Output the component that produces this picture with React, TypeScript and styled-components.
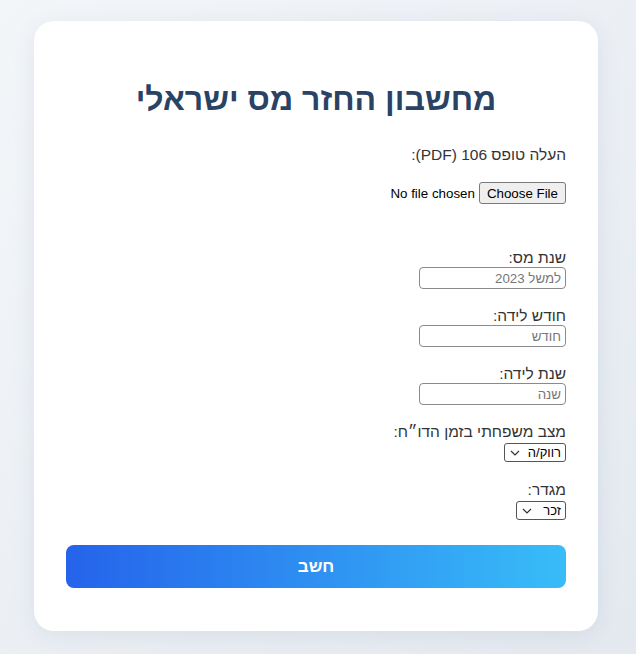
import React from "react";
import styled, { createGlobalStyle } from "styled-components";

const Global = createGlobalStyle`
  html, body { margin: 0; padding: 0; }
  body {
    min-height: 654px;
    background: linear-gradient(135deg, #f3f6f9 0%, #e4e9f0 100%);
    font-family: "Liberation Sans", Arial, sans-serif;
  }
`;

const Page = styled.div`
  display: flex;
  justify-content: flex-start;
  padding: 21px 0 23px 34px;
`;

const Card = styled.form`
  direction: rtl;
  width: 564px;
  height: 610px;
  box-sizing: border-box;
  background: #ffffff;
  border-radius: 20px;
  box-shadow: 0 4px 24px rgba(30, 50, 90, 0.08);
  padding: 58px 32px 0 32px;
  display: flex;
  flex-direction: column;
  align-items: flex-start;
`;

const Title = styled.h1`
  align-self: stretch;
  text-align: center;
  margin: 0 0 27px 0;
  font-size: 32px;
  line-height: 40px;
  font-weight: 700;
  color: #2a4365;
`;

const Field = styled.div<{ $gap?: number }>`
  display: flex;
  flex-direction: column;
  align-items: flex-start;
  margin-bottom: ${(p) => p.$gap ?? 18}px;
`;

const Label = styled.label`
  font-size: 15.5px;
  line-height: 18px;
  color: #333333;
`;

const FileInput = styled.input`
  margin: 18px 0 0 0;
  height: 22px;
  font-family: "Liberation Sans", Arial, sans-serif;
  font-size: 13.33px;
  color: #000;
  &::file-selector-button {
    font-family: "Liberation Sans", Arial, sans-serif;
    font-size: 13.33px;
    height: 22px;
    padding: 0 7px;
    margin: 0 0 0 4px;
    border: 1px solid #7a7a7a;
    border-radius: 3px;
    background: #efefef;
    color: #000;
  }
`;

const TextInput = styled.input`
  width: 147px;
  height: 22px;
  margin: 0;
  box-sizing: border-box;
  font-family: "Liberation Sans", Arial, sans-serif;
  font-size: 13.33px;
  border: 1px solid #8a8a8a;
  border-radius: 4px;
  padding: 1px 4px;
  &::placeholder { color: #777777; }
`;

const chevron =
  "data:image/svg+xml;utf8," +
  encodeURIComponent(
    '<svg xmlns="http://www.w3.org/2000/svg" width="10" height="6" viewBox="0 0 10 6"><path d="M1 1l4 4 4-4" fill="none" stroke="#333" stroke-width="1.2"/></svg>'
  );

const Select = styled.select<{ $w: number }>`
  appearance: none;
  -webkit-appearance: none;
  width: ${(p) => p.$w}px;
  height: 19px;
  margin: 2px 0 0 0;
  box-sizing: border-box;
  padding: 0 4px 0 18px;
  font-family: "Liberation Sans", Arial, sans-serif;
  font-size: 13px;
  font-weight: 400;
  line-height: 17px;
  border: 1px solid #555;
  border-radius: 3px;
  background: #fff url("${chevron}") no-repeat left 5px center;
  color: #000;
`;

const Submit = styled.button`
  align-self: stretch;
  margin-top: 7px;
  height: 43px;
  border: none;
  border-radius: 8px;
  background: linear-gradient(90deg, #2563eb 0%, #38bdf8 100%);
  color: #fff;
  font-family: "Liberation Sans", Arial, sans-serif;
  font-size: 17px;
  font-weight: 700;
  cursor: pointer;
`;

export default function App() {
  return (
    <>
      <Global />
      <Page>
        <Card onSubmit={(e) => e.preventDefault()}>
          <Title>מחשבון החזר מס ישראלי</Title>
          <Field $gap={45}>
            <Label>העלה טופס 106 (PDF):</Label>
            <FileInput type="file" accept="application/pdf" />
          </Field>
          <Field>
            <Label>שנת מס:</Label>
            <TextInput type="text" placeholder="למשל 2023" />
          </Field>
          <Field>
            <Label>חודש לידה:</Label>
            <TextInput type="text" placeholder="חודש" />
          </Field>
          <Field>
            <Label>שנת לידה:</Label>
            <TextInput type="text" placeholder="שנה" />
          </Field>
          <Field $gap={19}>
            <Label>מצב משפחתי בזמן הדו״ח:</Label>
            <Select $w={62} defaultValue="single">
              <option value="single">רווק/ה</option>
              <option value="married">נשוי/אה</option>
            </Select>
          </Field>
          <Field>
            <Label>מגדר:</Label>
            <Select $w={50} defaultValue="m">
              <option value="m">זכר</option>
              <option value="f">נקבה</option>
            </Select>
          </Field>
          <Submit type="submit">חשב</Submit>
        </Card>
      </Page>
    </>
  );
}
